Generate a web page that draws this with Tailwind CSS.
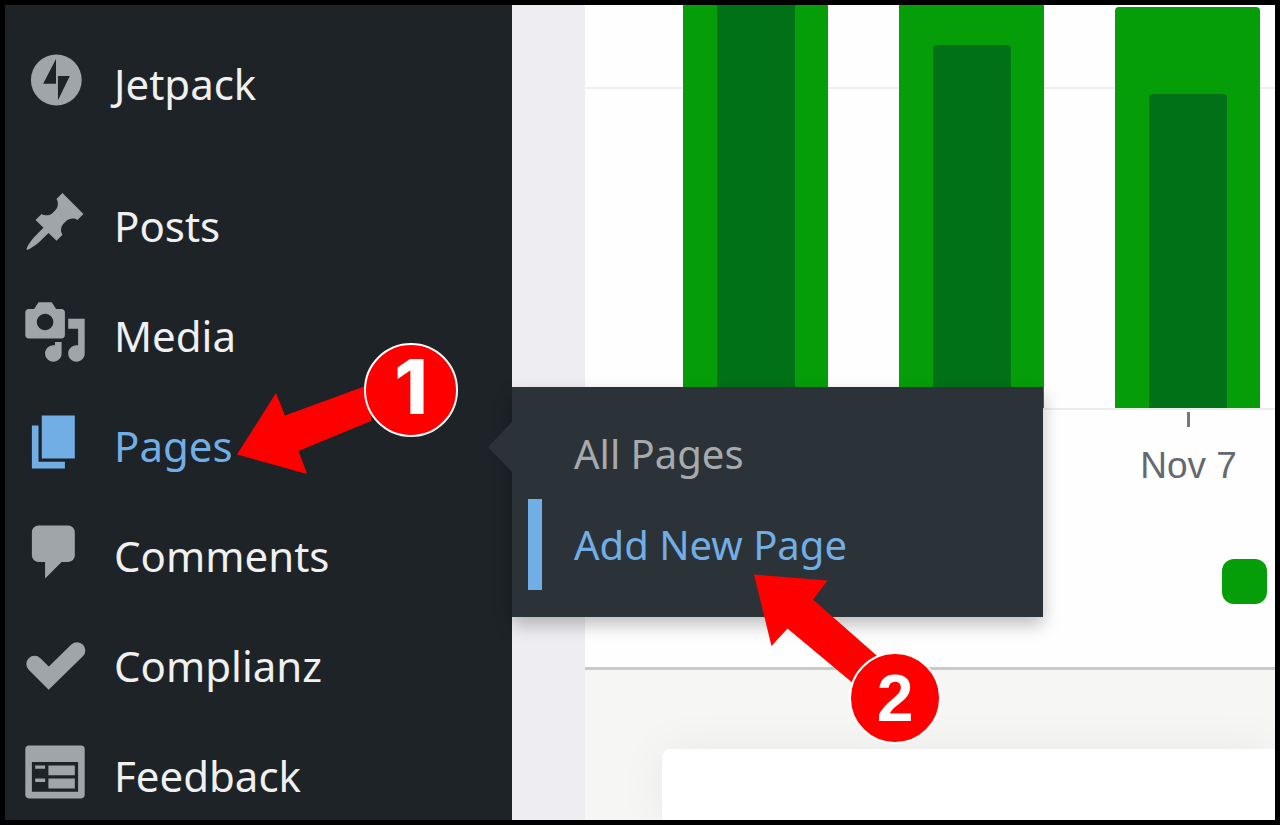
<!DOCTYPE html>
<html lang="en">
<head>
    <meta charset="UTF-8">
    <meta name="viewport" content="width=device-width, initial-scale=1.0">
    <title>Add New Page</title>
    <script src="https://cdn.jsdelivr.net/npm/@tailwindcss/browser@4"></script>
</head>
<body class="bg-black font-['Noto_Sans',sans-serif]">
    <div class="relative flex min-h-screen overflow-hidden border-5 border-black bg-[#eeeef2]">

        <!-- Admin menu -->
        <nav class="relative z-10 w-[507px] shrink-0 bg-[#1d2327] pt-[42px] pb-2 pl-[17px] text-[42px] leading-[66px] text-[#f0f0f1]">
            <ul class="flex flex-col gap-10">
                <li>
                    <a href="#" class="flex items-start gap-[26px]">
                        <svg class="size-[66px] text-[#a0a5aa]" viewBox="0 0 20 20" fill="currentColor">
                            <circle cx="10.4" cy="10" r="7.7" />
                            <path fill="#1d2327" d="M10.3 3.6v7.5H6.4zM10.9 8.8h3.6l-3.6 7.3z" />
                        </svg>
                        <span class="mt-1">Jetpack</span>
                    </a>
                </li>
                <li class="mt-8">
                    <a href="#" class="flex items-start gap-[26px]">
                        <svg class="size-[66px] text-[#a0a5aa]" viewBox="0 0 20 20" fill="currentColor">
                            <path d="M10.44 3.02l1.82-1.82 6.36 6.35-1.83 1.82c-1.05-.68-2.48-.57-3.41.36l-.75.75c-.92.93-1.04 2.35-.35 3.41l-1.83 1.82-2.41-2.41-2.8 2.79c-.42.42-3.38 2.71-3.8 2.29s1.86-3.39 2.28-3.81l2.79-2.79L4.1 9.36l1.83-1.82c1.05.69 2.48.57 3.4-.36l.75-.75c.93-.92 1.05-2.35.36-3.41z" />
                        </svg>
                        <span class="mt-1">Posts</span>
                    </a>
                </li>
                <li>
                    <a href="#" class="flex items-start gap-[26px]">
                        <svg class="size-[66px] text-[#a0a5aa]" viewBox="0 0 20 20" fill="currentColor">
                            <path fill-rule="evenodd" d="M13 11V4c0-.55-.45-1-1-1h-1.67L9 1H5L3.67 3H2c-.55 0-1 .45-1 1v7c0 .55.45 1 1 1h10c.55 0 1-.45 1-1zM7 4.5c1.38 0 2.5 1.12 2.5 2.5S8.38 9.5 7 9.5 4.5 8.38 4.5 7 5.62 4.5 7 4.5zM14 6h5v10.5c0 1.38-1.12 2.5-2.5 2.5S14 17.88 14 16.5s1.12-2.5 2.5-2.5c.17 0 .34.02.5.05V9h-3V6zm-4 8.05V13h2v3.5c0 1.38-1.12 2.5-2.5 2.5S7 17.88 7 16.5 8.12 14 9.5 14c.17 0 .34.02.5.05z" />
                        </svg>
                        <span class="mt-1">Media</span>
                    </a>
                </li>
                <li class="relative">
                    <a href="#" class="flex items-start gap-[26px] text-[#72aee6]">
                        <svg class="size-[66px]" viewBox="0 0 20 20" fill="currentColor">
                            <path d="M6 15V2h10v13H6zm-1 1h8v2H3V5h2v11z" />
                        </svg>
                        <span class="mt-1">Pages</span>
                    </a>

                    <!-- Flyout -->
                    <div class="absolute -top-[22px] left-full w-[531px] bg-[#2c3338] pt-[21px] pb-[27px] text-[40px] leading-[91px] shadow-[0_8px_16px_rgba(0,0,0,0.25)]">
                        <svg class="absolute top-[35px] right-full h-[50px] w-6" viewBox="0 0 24 50" fill="#2c3338">
                            <path d="M24 0v50L0 25z" />
                        </svg>
                        <ul class="pl-4">
                            <li><a href="#" class="block border-l-14 border-transparent pl-8 text-[#a7aaad]">All Pages</a></li>
                            <li><a href="#" class="block border-l-14 border-[#72aee6] pl-8 text-[#72aee6]">Add New Page</a></li>
                        </ul>
                    </div>
                </li>
                <li>
                    <a href="#" class="flex items-start gap-[26px]">
                        <svg class="size-[66px] text-[#a0a5aa]" viewBox="0 0 20 20" fill="currentColor">
                            <path d="M5 2h9c1.1 0 2 .9 2 2v7c0 1.1-.9 2-2 2h-2l-5 5v-5H5c-1.1 0-2-.9-2-2V4c0-1.1.9-2 2-2z" />
                        </svg>
                        <span class="mt-1">Comments</span>
                    </a>
                </li>
                <li>
                    <a href="#" class="flex items-start gap-[26px]">
                        <svg class="size-[66px] text-[#a0a5aa]" viewBox="0 0 20 20" fill="none" stroke="currentColor" stroke-width="5" stroke-linecap="round">
                            <path d="M3.8 10.6l4.3 4.3 8.6-8.4" />
                        </svg>
                        <span class="mt-1">Complianz</span>
                    </a>
                </li>
                <li>
                    <a href="#" class="flex items-start gap-[26px]">
                        <svg class="size-[66px] text-[#a0a5aa]" viewBox="0 0 20 20" fill="currentColor">
                            <path fill-rule="evenodd" d="M2 2h16c.55 0 1 .45 1 1v14c0 .55-.45 1-1 1H2c-.55 0-1-.45-1-1V3c0-.55.45-1 1-1zm15 14V7H3v9h14zM4 8v1h3V8H4zm4 0v3h8V8H8zm-4 4v1h3v-1H4zm4 0v3h8v-3H8z" />
                        </svg>
                        <span class="mt-1">Feedback</span>
                    </a>
                </li>
            </ul>
        </nav>

        <!-- Stats widget -->
        <main class="ml-[73px] flex flex-1 flex-col bg-[#f6f6f5]">
            <section class="border-b-3 border-[#c8c9ca] bg-[#fefefe] pb-[63px]">
                <div class="relative flex h-[405px] items-end justify-end gap-[71px] border-b-2 border-[#ececec] pr-[15px]">
                    <div class="absolute inset-x-0 top-[82px] h-[2px] bg-[#f0f0f0]"></div>
                    <div class="relative flex h-full w-[145px] justify-center bg-[#069e08]">
                        <div class="w-[78px] bg-[#007117]"></div>
                    </div>
                    <div class="relative flex h-full w-[145px] items-end justify-center bg-[#069e08]">
                        <div class="h-[363px] w-[78px] rounded-t-sm bg-[#007117]"></div>
                    </div>
                    <div class="relative flex h-[401px] w-[145px] items-end justify-center rounded-t-sm bg-[#069e08]">
                        <div class="h-[314px] w-[78px] rounded-t-sm bg-[#007117]"></div>
                    </div>
                </div>
                <div class="flex justify-end pr-[14px]">
                    <div class="flex w-[145px] flex-col items-center pt-[2px]">
                        <div class="h-[15px] w-[3px] bg-[#777]"></div>
                        <p class="mt-4 font-['Liberation_Sans',sans-serif] text-[37px] leading-[46px] text-[#646970]">Nov 7</p>
                    </div>
                </div>
                <div class="mt-[70px] flex justify-end pr-2">
                    <div class="size-[45px] rounded-xl bg-[#069e08]"></div>
                </div>
            </section>
            <section class="flex flex-1 pt-[79px] pl-[77px]">
                <div class="flex-1 rounded-tl-lg bg-white shadow-[0_0_48px_rgba(0,0,0,0.06)]"></div>
            </section>
        </main>

        <!-- Step 1 -->
        <svg class="absolute top-[371px] left-[231px] z-20 h-[100px] w-[150px]" viewBox="0 0 150 100" fill="#ff0000">
            <path d="M1 78.500L40 17l9 22.500L135 8v37L62.500 75 71 98z" />
        </svg>
        <div class="absolute top-[338px] left-[359px] z-20 flex size-[94px] items-center justify-center rounded-full border-2 border-white bg-[#ff0000] pb-2 font-['Inter',sans-serif] text-[76px] leading-none font-extrabold text-white">1</div>

        <!-- Step 2 -->
        <svg class="absolute top-[569px] left-[749px] z-20 h-[120px] w-[130px]" viewBox="0 0 130 120" fill="#ff0000">
            <path d="M0 .5L73.500 6.500 59 25.500 130 88l-24 27L33.500 54.500 17.500 72z" />
        </svg>
        <div class="absolute top-[647px] left-[844px] z-20 flex size-[92px] items-center justify-center rounded-full border-2 border-white bg-[#ff0000] font-['Liberation_Sans',sans-serif] text-[66px] leading-none font-bold text-white">2</div>
    </div>
</body>
</html>
